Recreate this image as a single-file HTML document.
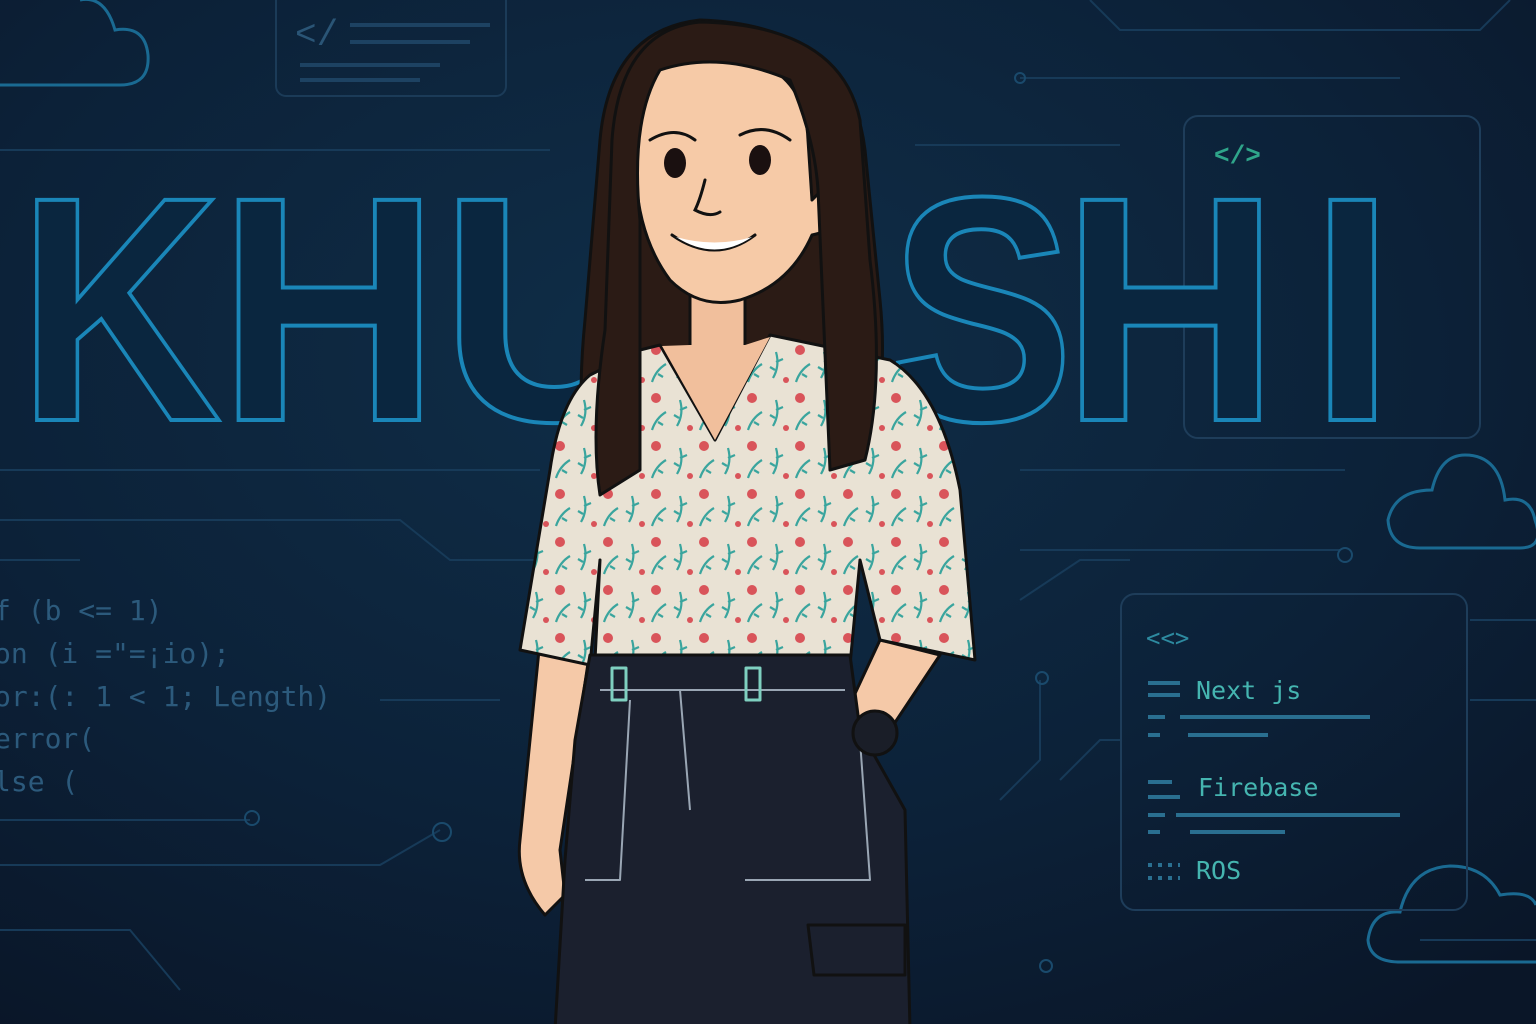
<!DOCTYPE html>
<html><head><meta charset="utf-8"><style>
html,body{margin:0;padding:0;width:1536px;height:1024px;overflow:hidden;background:#0b1a2d}
svg{display:block}
</style></head><body>
<svg width="1536" height="1024" viewBox="0 0 1536 1024" xmlns="http://www.w3.org/2000/svg">
<defs>
<radialGradient id="bg" cx="0.45" cy="0.35" r="0.8">
<stop offset="0" stop-color="#0f2e48"/><stop offset="0.6" stop-color="#0c2138"/><stop offset="1" stop-color="#0a1628"/>
</radialGradient>
<pattern id="flor" width="48" height="48" patternUnits="userSpaceOnUse">
<rect width="48" height="48" fill="#e9e2d4"/>
<path d="M5 42 Q12 30 8 16 M8 26 l7 -3 M7 34 l-5 -3" stroke="#3aa59e" stroke-width="2.2" fill="none"/>
<path d="M28 46 Q32 34 42 28 M34 38 l5 3" stroke="#3aa59e" stroke-width="2.2" fill="none"/>
<circle cx="32" cy="14" r="5" fill="#d9545a"/><circle cx="18" cy="44" r="3" fill="#d9545a"/>
</pattern>
</defs>
<rect width="1536" height="1024" fill="url(#bg)"/>
<g stroke="#173a58" stroke-width="2" fill="none">
<path d="M0 150 H550"/><path d="M915 145 H1120"/><path d="M0 520 H400 L450 560 H560"/>
<path d="M0 470 H540"/><path d="M0 820 H250"/><path d="M0 930 H130 L180 990"/>
<path d="M0 865 H380 L440 830"/><path d="M1020 470 H1345"/><path d="M1020 550 H1340"/>
<path d="M1020 600 L1080 560 H1130"/><path d="M1040 680 V760 L1000 800"/><path d="M1060 780 L1100 740 H1120"/>
<path d="M1020 78 H1400"/><path d="M1090 0 L1120 30 H1480 L1510 0"/>
<path d="M1470 620 H1536"/><path d="M1470 700 H1536"/><path d="M1420 940 H1536"/>
<path d="M0 560 H80"/><path d="M380 700 H500"/>
</g>
<g fill="none" stroke="#1a4a6c" stroke-width="2">
<circle cx="1020" cy="78" r="5"/><circle cx="1345" cy="555" r="7"/><circle cx="1042" cy="678" r="6"/><circle cx="442" cy="832" r="9"/><circle cx="252" cy="818" r="7"/><circle cx="1046" cy="966" r="6"/>
</g>
<path d="M0 85 H120 Q150 85 148 55 Q145 25 115 30 Q105 -5 80 0" stroke="#1a6a92" stroke-width="3" fill="none"/>
<rect x="276" y="-10" width="230" height="106" rx="10" fill="none" stroke="#1b3b58" stroke-width="2"/>
<text x="295" y="45" font-family="Liberation Mono,monospace" font-size="36" fill="#2a5576">&lt;/</text>
<g stroke="#1d4262" stroke-width="4"><path d="M350 25 H490 M350 42 H470 M300 65 H440 M300 80 H420"/></g>
<rect x="1184" y="116" width="296" height="322" rx="14" fill="none" stroke="#1e3d5a" stroke-width="2"/>
<text x="1214" y="163" font-family="Liberation Mono,monospace" font-size="26" font-weight="bold" fill="#2fa58a">&lt;/&gt;</text>
<g font-family="Liberation Sans,sans-serif" font-weight="bold" font-size="320" fill="#0a263f" stroke="#1a86b8" stroke-width="4">
<text x="18" y="420" transform="translate(18 0) scale(0.88 1) translate(-18 0)">K</text>
<text x="218" y="420" transform="translate(218 0) scale(0.96 1) translate(-218 0)">H</text>
<text x="440" y="420">U</text>
<text x="890" y="420" transform="translate(890 0) scale(0.86 1) translate(-890 0)">S</text>
<text x="1062" y="420" transform="translate(1062 0) scale(0.94 1) translate(-1062 0)">H</text>
<text x="1310" y="420" transform="translate(1310 0) scale(0.95 1) translate(-1310 0)">I</text>
</g>
<path d="M1420 548 H1520 Q1545 548 1535 520 Q1530 495 1505 500 Q1500 455 1465 455 Q1440 455 1432 490 Q1395 490 1388 520 Q1390 548 1420 548Z" stroke="#1a6a92" stroke-width="3" fill="none"/>
<path d="M1400 962 H1536 M1400 962 Q1370 962 1368 940 Q1372 910 1400 912 Q1410 868 1450 866 Q1485 866 1500 895 Q1530 890 1536 905" stroke="#1a6a92" stroke-width="3" fill="none"/>
<g font-family="DejaVu Sans Mono,Liberation Mono,monospace" font-size="28" fill="#2c5a7c">
<text x="-6" y="620">f (b &lt;= 1)</text>
<text x="-6" y="663">on (i ="=¡io);</text>
<text x="-6" y="706">or:(: 1 &lt; 1; Length)</text>
<text x="-6" y="748">error(</text>
<text x="-6" y="791">lse (</text>
</g>
<rect x="1121" y="594" width="346" height="316" rx="14" fill="none" stroke="#1e3d5a" stroke-width="2"/>
<text x="1146" y="646" font-family="DejaVu Sans Mono,monospace" font-size="24" fill="#2d8aa0">&lt;&lt;&gt;</text>
<g font-family="DejaVu Sans Mono,monospace" font-size="25" fill="#45b5b0">
<text x="1196" y="699">Next js</text><text x="1198" y="796">Firebase</text><text x="1196" y="879">ROS</text>
</g>
<g stroke="#2a6f90" stroke-width="4">
<path d="M1148 683 H1180 M1148 695 H1180 M1148 717 H1165 M1180 717 H1370 M1148 735 H1160 M1188 735 H1268"/>
<path d="M1148 782 H1172 M1148 797 H1180 M1148 815 H1165 M1176 815 H1400 M1148 832 H1160 M1190 832 H1285"/>
<path d="M1148 865 H1180 M1148 878 H1180" stroke-dasharray="4 6"/>
</g>
<g stroke="#111" stroke-width="3" stroke-linejoin="round">
<path d="M700 20 Q610 30 600 140 L585 320 Q575 420 590 500 L640 490 L660 360 L780 340 L800 480 L860 460 Q890 400 880 300 L865 150 Q850 25 700 20Z" fill="#2b1b15"/>
<path d="M690 290 L690 350 L745 350 L745 290Z" fill="#f1bf9c"/>
<path d="M540 640 L520 840 Q515 880 545 915 L565 895 L560 850 L590 650Z" fill="#f5c9a8"/>
<path d="M880 640 L845 715 L870 760 L940 655Z" fill="#f5c9a8"/>
<path d="M640 350 L590 375 Q560 400 550 470 L520 650 L590 665 L600 560 L595 660 L850 665 L860 560 L880 640 L975 660 L960 490 Q940 390 890 360 L770 335 L715 440 L660 345Z" fill="url(#flor)"/>
<path d="M662 346 L715 440 L770 337 L745 345 L690 345Z" fill="#f1bf9c" stroke="none"/>
<path d="M590 655 L850 655 L860 730 L905 810 L910 1030 L555 1030 L565 860 L575 740Z" fill="#1b202e"/>
<path d="M808 925 H905 V975 H814Z" fill="#1b202e"/>
<g fill="none" stroke="#9aa6b4" stroke-width="2"><path d="M600 690 H845 M585 880 H620 L630 700 M745 880 H870 L860 740 M680 690 L690 810"/></g>
<rect x="612" y="668" width="14" height="32" fill="none" stroke="#7fd0c0"/><rect x="746" y="668" width="14" height="32" fill="none" stroke="#7fd0c0"/>
<circle cx="875" cy="733" r="22" fill="#1a1e28"/>
<path d="M640 100 Q640 60 720 55 Q805 60 808 140 L812 200 Q840 170 842 200 Q840 230 812 235 Q790 285 740 300 Q700 310 670 280 Q640 240 636 180Z" fill="#f6caa7"/>
<path d="M700 22 Q620 30 612 140 L605 330 Q590 430 600 495 L640 470 L640 220 Q630 120 660 70 Q720 50 790 80 Q815 140 818 190 L830 470 L865 460 Q885 380 870 260 L860 120 Q840 25 700 22Z" fill="#2b1b15"/>
</g>
<g stroke="#111" stroke-width="3" fill="none" stroke-linecap="round">
<path d="M650 140 Q675 125 695 140"/><path d="M740 135 Q765 122 790 140"/>
<path d="M705 180 Q700 200 695 210 Q710 218 720 212"/>
<path d="M672 235 Q715 265 755 235"/>
</g>
<ellipse cx="675" cy="163" rx="11" ry="15" fill="#1a1010"/><ellipse cx="760" cy="160" rx="11" ry="15" fill="#1a1010"/>
<path d="M676 237 Q715 262 752 237 Q715 248 676 237Z" fill="#fff"/>
</svg>
</body></html>
